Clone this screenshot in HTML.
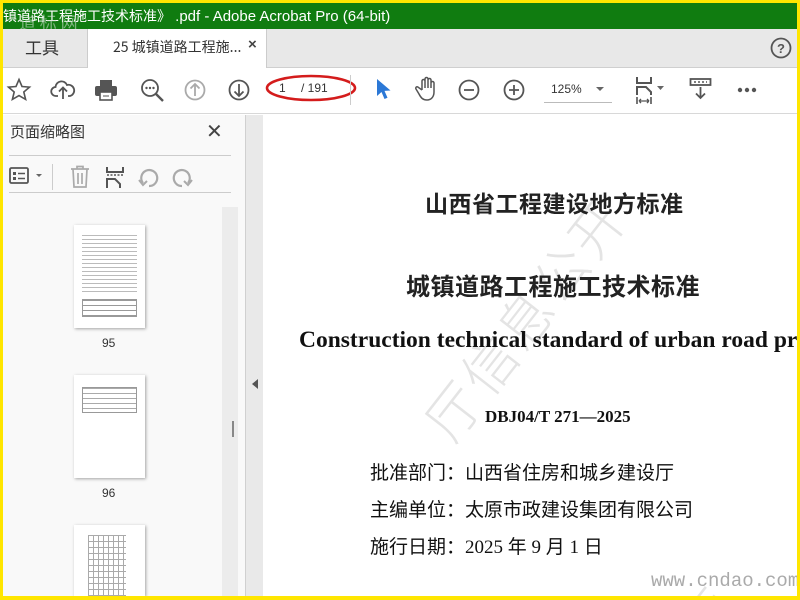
<!DOCTYPE html>
<html><head><meta charset="utf-8"><style>
*{margin:0;padding:0;box-sizing:border-box}
html,body{overflow:hidden}
body{width:800px;height:600px;background:#ffe600;font-family:"Liberation Sans","Noto Sans CJK SC",sans-serif;position:relative}
.abs{position:absolute}
#win{position:absolute;left:3px;top:3px;width:794px;height:593px;background:#fff;overflow:hidden}
#title{position:absolute;left:0;top:0;width:794px;height:26px;background:#107c10;color:#fff;font-size:15px;line-height:26px;white-space:nowrap;overflow:hidden}
#tabs{position:absolute;left:0;top:26px;width:794px;height:39px;background:#e8e8e8;border-bottom:1px solid #cfcfcf}
#tb{position:absolute;left:0;top:65px;width:794px;height:46px;background:#fff;border-bottom:1px solid #d8d8d8}
svg{position:absolute;overflow:visible}
#side{position:absolute;left:0;top:112px;width:242px;height:481px;background:#f9f9f9;overflow:hidden}
#split{position:absolute;left:242px;top:112px;width:18px;height:481px;background:#e9e9e9;border-left:1px solid #d0d0d0}
#doc{position:absolute;left:260px;top:112px;width:534px;height:481px;background:#fff;overflow:hidden}
.cn{font-family:"Noto Sans CJK SC",sans-serif}
.sr{font-family:"Liberation Serif","Noto Serif CJK SC",serif}
.thumb{position:absolute;left:71px;width:71px;height:103px;background:#fff;box-shadow:1px 1px 3px rgba(0,0,0,.35)}
.ln{position:absolute;height:1px;background:#aaa}
</style></head><body>
<div id="win">
<div id="title"><span class="cn" style="font-size:14px">镇道路工程施工技术标准》</span> .pdf - Adobe Acrobat Pro (64-bit)</div>
<div class="abs cn" style="left:16px;top:6px;color:rgba(200,220,200,.6);font-size:17px">道 标 网</div>
<div id="tabs">
 <div class="abs cn" style="left:22px;top:5px;font-size:17px;color:#333">工具</div>
 <div class="abs" style="left:84px;top:0;width:180px;height:40px;background:#fff;border-left:1px solid #ccc;border-right:1px solid #ccc"></div>
 <div class="abs cn" style="left:110px;top:8px;font-size:14px;color:#333">25 城镇道路工程施...</div>
 <div class="abs" style="left:245px;top:7px;font-size:15px;font-weight:bold;color:#444">×</div>
 <svg style="left:767px;top:8px" width="22" height="22"><circle cx="11" cy="11" r="9.5" fill="none" stroke="#555" stroke-width="1.8"/><text x="11" y="16" text-anchor="middle" font-size="13" font-weight="bold" fill="#555" font-family="Liberation Sans">?</text></svg>
</div>
<div id="tb">
 <svg style="left:4px;top:10px" width="24" height="24"><path d="M12 1.5l3 7 7.5.6-5.7 4.9 1.8 7.4L12 17.5 5.4 21.4l1.8-7.4L1.5 9.1 9 8.5z" fill="none" stroke="#555" stroke-width="1.6"/></svg>
 <svg style="left:48px;top:11px" width="24" height="22"><path d="M7 17H5a4.5 4.5 0 0 1-.5-9A6 6 0 0 1 16 6a5 5 0 0 1 3 11h-2M12 20V9M8 12.5l4-4 4 4" fill="none" stroke="#555" stroke-width="1.8"/></svg>
 <svg style="left:91px;top:10px" width="24" height="24"><rect x="6" y="2" width="12" height="6" fill="#555"/><rect x="1" y="8" width="22" height="10" rx="2" fill="#555"/><rect x="6" y="14" width="12" height="8" fill="#fff" stroke="#555" stroke-width="1.6"/><line x1="9" y1="18" x2="15" y2="18" stroke="#555"/></svg>
 <svg style="left:137px;top:10px" width="26" height="26"><circle cx="10" cy="10" r="8" fill="none" stroke="#555" stroke-width="1.8"/><path d="M16 16l7 7" stroke="#555" stroke-width="2.4"/><circle cx="6.5" cy="10" r="1.2" fill="#555"/><circle cx="10" cy="10" r="1.2" fill="#555"/><circle cx="13.5" cy="10" r="1.2" fill="#555"/></svg>
 <svg style="left:181px;top:11px" width="22" height="22"><circle cx="11" cy="11" r="9.5" fill="none" stroke="#aaa" stroke-width="1.8"/><path d="M11 17V5M6.5 9.5L11 5l4.5 4.5" fill="none" stroke="#aaa" stroke-width="1.8"/></svg>
 <svg style="left:225px;top:11px" width="22" height="22"><circle cx="11" cy="11" r="9.5" fill="none" stroke="#555" stroke-width="1.8"/><path d="M11 5v12M6.5 12.5L11 17l4.5-4.5" fill="none" stroke="#555" stroke-width="1.8"/></svg>
 <div class="abs" style="left:276px;top:13px;font-size:12px;color:#333">1</div>
 <div class="abs" style="left:298px;top:13px;font-size:12px;color:#333">/ 191</div>
 <svg style="left:262px;top:4px" width="95" height="32"><ellipse cx="46" cy="16" rx="44" ry="12" fill="none" stroke="#d41c1c" stroke-width="2.6"/></svg>
 <div class="abs" style="left:347px;top:7px;width:1px;height:30px;background:#ccc"></div>
 <svg style="left:372px;top:10px" width="16" height="22"><path d="M2 1v17l4.5-4 3 7 3-1.3-3-6.8 6-.4z" fill="#2b78d6"/></svg>
 <svg style="left:412px;top:8px" width="24" height="26"><path d="M7 14V5a1.5 1.5 0 0 1 3 0v7V3a1.5 1.5 0 0 1 3 0v9V4a1.5 1.5 0 0 1 3 0v8V7a1.5 1.5 0 0 1 3 0v9c0 5-3 8-7 8s-6-2-8-6l-3-5a1.4 1.4 0 0 1 2.3-1.6L7 14" fill="none" stroke="#555" stroke-width="1.5"/></svg>
 <svg style="left:455px;top:11px" width="22" height="22"><circle cx="11" cy="11" r="9.5" fill="none" stroke="#555" stroke-width="1.8"/><path d="M6 11h10" stroke="#555" stroke-width="1.8"/></svg>
 <svg style="left:500px;top:11px" width="22" height="22"><circle cx="11" cy="11" r="9.5" fill="none" stroke="#555" stroke-width="1.8"/><path d="M6 11h10M11 6v10" stroke="#555" stroke-width="1.8"/></svg>
 <div class="abs" style="left:548px;top:14px;font-size:12px;color:#333">125%</div>
 <svg style="left:593px;top:19px" width="10" height="6"><path d="M0 0h8L4 4z" fill="#666"/></svg>
 <div class="abs" style="left:541px;top:34px;width:68px;height:1px;background:#bbb"></div>
 <svg style="left:632px;top:9px" width="36" height="28"><path d="M2 0v6h14V0M2 18v-8h9l5 5v3" fill="none" stroke="#555" stroke-width="2"/><path d="M4 24h10M4 24l2-2M4 24l2 2M14 24l-2-2M14 24l-2 2" stroke="#555" stroke-width="1.3" fill="none"/><path d="M2 20v7M16 20v7" stroke="#555" stroke-width="1.6"/><path d="M22 9h7l-3.5 4z" fill="#666"/></svg>
 <svg style="left:686px;top:10px" width="24" height="24"><rect x="1.5" y="1" width="20" height="6" fill="none" stroke="#555" stroke-width="1.8"/><path d="M5 4h2M9 4h2M13 4h2M17 4h1" stroke="#555" stroke-width="1.4"/><path d="M11.5 9v11M7 15.5l4.5 4.5 4.5-4.5" fill="none" stroke="#555" stroke-width="1.8"/></svg>
 <svg style="left:734px;top:19px" width="22" height="6"><circle cx="3" cy="3" r="2.2" fill="#555"/><circle cx="10" cy="3" r="2.2" fill="#555"/><circle cx="17" cy="3" r="2.2" fill="#555"/></svg>
</div>
<div id="side">
 <div class="abs cn" style="left:7px;top:6px;font-size:15px;color:#333">页面缩略图</div>
 <div class="abs" style="left:203px;top:4px;font-size:20px;color:#444">✕</div>
 <div class="ln" style="left:6px;top:40px;width:222px;background:#ccc"></div>
 <svg style="left:6px;top:52px" width="36" height="20"><rect x="1" y="1" width="18" height="15" rx="1.5" fill="none" stroke="#555" stroke-width="1.8"/><rect x="4" y="5" width="3" height="3" fill="#555"/><rect x="4" y="10" width="3" height="3" fill="#555"/><path d="M9 6.5h7M9 11.5h7" stroke="#555" stroke-width="1.6"/><path d="M27 7h6l-3 3z" fill="#666"/></svg>
 <div class="abs" style="left:49px;top:49px;width:1px;height:26px;background:#ccc"></div>
 <svg style="left:66px;top:50px" width="22" height="24"><path d="M2 4h18M8 4V1.5h6V4M4 4l1 18h12l1-18M9 8v11M13 8v11" fill="none" stroke="#aaa" stroke-width="1.7"/></svg>
 <svg style="left:102px;top:52px" width="22" height="22"><path d="M2 0v5h16V0" fill="none" stroke="#555" stroke-width="2"/><path d="M2 8h16" stroke="#555" stroke-width="1.5" stroke-dasharray="2 1.5"/><path d="M2 21v-9h8l5 5v4" fill="none" stroke="#555" stroke-width="2"/></svg>
 <svg style="left:135px;top:52px" width="22" height="22"><path d="M5 16A8 8 0 1 1 11 19" fill="none" stroke="#aaa" stroke-width="2.2"/><path d="M1 13l4 5 4-4" fill="none" stroke="#aaa" stroke-width="2"/></svg>
 <svg style="left:168px;top:52px" width="22" height="22"><path d="M17 16A8 8 0 1 0 11 19" fill="none" stroke="#aaa" stroke-width="2.2"/><path d="M21 13l-4 5-4-4" fill="none" stroke="#aaa" stroke-width="2"/></svg>
 <div class="ln" style="left:6px;top:77px;width:222px;background:#ccc"></div>
 <div class="abs" style="left:219px;top:92px;width:16px;height:389px;background:#ececec"></div>
 <div class="thumb" style="top:110px">
  <div class="ln" style="left:8px;top:10px;width:55px;height:60px;background:repeating-linear-gradient(#bbb 0 1px,transparent 1px 4px)"></div>
  <div class="ln" style="left:8px;top:74px;width:55px;height:18px;background:repeating-linear-gradient(#999 0 1px,transparent 1px 5px);border:1px solid #999"></div>
 </div>
 <div class="abs" style="left:99px;top:221px;font-size:12px;color:#333">95</div>
 <div class="thumb" style="top:260px">
  <div class="ln" style="left:8px;top:12px;width:55px;height:26px;background:repeating-linear-gradient(#aaa 0 1px,transparent 1px 5px);border:1px solid #999"></div>
 </div>
 <div class="abs" style="left:99px;top:371px;font-size:12px;color:#333">96</div>
 <div class="thumb" style="top:410px;height:71px">
  <div class="ln" style="left:14px;top:10px;width:38px;height:61px;background:repeating-linear-gradient(90deg,#aaa 0 1px,transparent 1px 5px),repeating-linear-gradient(#aaa 0 1px,transparent 1px 6px)"></div>
 </div>
</div>
<div id="split"><svg style="left:5px;top:264px" width="8" height="10"><path d="M7 0v10L1 5z" fill="#555"/></svg><div class="abs" style="left:-14px;top:306px;width:2px;height:16px;background:#888"></div></div>
<div id="doc">
 <svg style="left:0;top:0;overflow:hidden" width="534" height="481">
  <g font-family="Noto Sans CJK SC" font-size="54" font-weight="300" fill="#e4e4e4" letter-spacing="4">
   <text transform="translate(190,330) rotate(-52)">厅信息公开</text>
   <text transform="translate(300,720) rotate(-52)">城乡建设厅</text>
  </g>
 </svg>
 <div class="abs cn" style="left:162px;top:70px;font-size:23px;font-weight:bold;color:#222;letter-spacing:0.5px">山西省工程建设地方标准</div>
 <div class="abs cn" style="left:143px;top:152px;font-size:24px;font-weight:bold;color:#222;letter-spacing:0.5px">城镇道路工程施工技术标准</div>
 <div class="abs sr" style="left:36px;top:212px;font-size:23.5px;font-weight:bold;color:#111;white-space:nowrap">Construction technical standard of urban road pro</div>
 <div class="abs sr" style="left:222px;top:292px;font-size:17px;font-weight:bold;color:#111">DBJ04/T 271—2025</div>
 <div class="abs cn" style="left:107px;top:343px;font-size:19px;color:#111;white-space:nowrap">批准部门：山西省住房和城乡建设厅</div>
 <div class="abs cn" style="left:107px;top:380px;font-size:19px;color:#111;white-space:nowrap">主编单位：太原市政建设集团有限公司</div>
 <div class="abs" style="left:107px;top:417px;font-size:19px;color:#111;white-space:nowrap;font-family:'Liberation Serif','Noto Sans CJK SC',serif">施行日期：2025 年 9 月 1 日</div>
 <div class="abs" style="left:388px;top:455px;font-family:'Liberation Mono',monospace;font-size:19px;color:#aaa">www.cndao.com</div>
</div>
</div>
</body></html>
